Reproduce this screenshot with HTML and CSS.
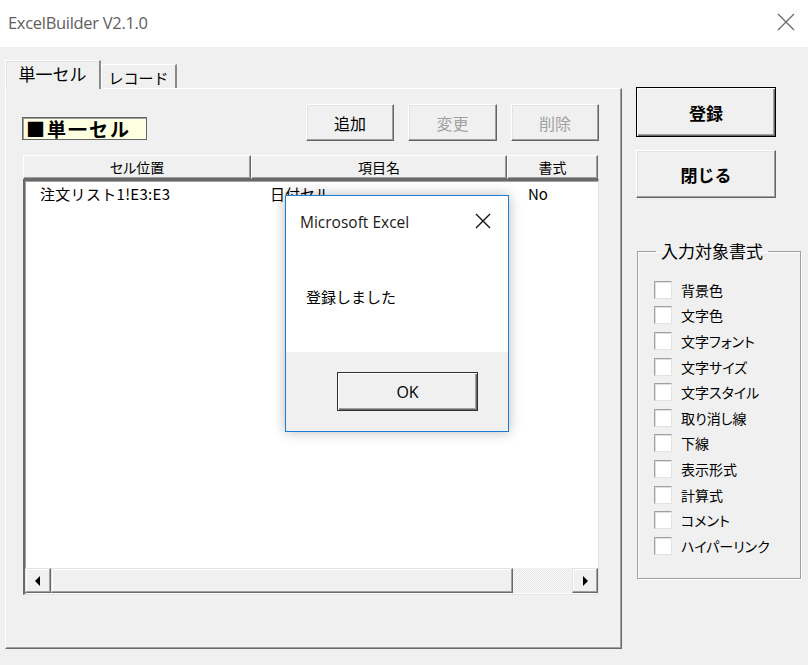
FILE: index.html
```html
<!DOCTYPE html>
<html lang="ja">
<head>
<meta charset="utf-8">
<title>ExcelBuilder</title>
<link rel="stylesheet" href="styles.css">
</head>
<body>
<div class="window">
  <div class="titlebar">
    <span class="title">ExcelBuilder V2.1.0</span>
    <svg class="close" width="18" height="18" viewBox="0 0 18 18"><path d="M1 1L17 17M17 1L1 17" stroke="#6b6b6b" stroke-width="1.3" fill="none"/></svg>
  </div>
  <div class="client">
    <div class="left">
      <div class="tabstrip">
        <div class="tab active">単一セル</div>
        <div class="tab">レコード</div>
      </div>
      <div class="panel">
        <div class="toolbar">
          <div class="mode-label">■単一セル</div>
          <button class="btn first">追加</button>
          <button class="btn disabled">変更</button>
          <button class="btn disabled">削除</button>
        </div>
        <div class="list-head">
          <div class="hcell">セル位置</div>
          <div class="hcell">項目名</div>
          <div class="hcell">書式</div>
        </div>
        <div class="list-body">
          <div class="rows">
            <div class="row">
              <span class="c1">注文リスト1!E3:E3</span>
              <span class="c2">日付セル</span>
              <span class="c3">No</span>
            </div>
          </div>
          <div class="hscroll">
            <div class="sb-btn"><svg width="6" height="10" viewBox="0 0 6 10"><path d="M5 0V10L0 5Z" fill="#000"/></svg></div>
            <div class="sb-thumb"></div>
            <div class="sb-track"></div>
            <div class="sb-btn"><svg width="6" height="10" viewBox="0 0 6 10"><path d="M1 0V10L6 5Z" fill="#000"/></svg></div>
          </div>
        </div>
      </div>
    </div>
    <div class="right">
      <button class="btn big default">登録</button>
      <button class="btn big">閉じる</button>
      <fieldset class="group">
        <legend>入力対象書式</legend>
        <label class="chk"><span class="box"></span>背景色</label>
        <label class="chk"><span class="box"></span>文字色</label>
        <label class="chk"><span class="box"></span>文字フォント</label>
        <label class="chk"><span class="box"></span>文字サイズ</label>
        <label class="chk"><span class="box"></span>文字スタイル</label>
        <label class="chk"><span class="box"></span>取り消し線</label>
        <label class="chk"><span class="box"></span>下線</label>
        <label class="chk"><span class="box"></span>表示形式</label>
        <label class="chk"><span class="box"></span>計算式</label>
        <label class="chk"><span class="box"></span>コメント</label>
        <label class="chk"><span class="box"></span>ハイパーリンク</label>
      </fieldset>
    </div>
  </div>
  <div class="msgbox">
    <div class="msg-title">
      <span>Microsoft Excel</span>
      <svg width="16" height="16" viewBox="0 0 16 16"><path d="M1 1L15 15M15 1L1 15" stroke="#111" stroke-width="1.4" fill="none"/></svg>
    </div>
    <div class="msg-text">登録しました</div>
    <div class="msg-foot">
      <button class="ok">OK</button>
    </div>
  </div>
</div>
</body>
</html>
```
FILE: styles.css
```css
* { box-sizing: border-box; }
html, body { margin: 0; padding: 0; }
body {
  width: 808px;
  height: 665px;
  overflow: hidden;
  font-family: "Noto Sans CJK JP", "Noto Sans", sans-serif;
  font-size: 15px;
  color: #000;
  background: #f0f0f0;
}
.window { position: relative; width: 808px; height: 665px; }
.titlebar {
  height: 47px;
  background: #fff;
  display: flex;
  align-items: center;
  justify-content: space-between;
  padding: 0 13px 0 8px;
}
.title {
  font-family: "Open Sans", "Noto Sans", sans-serif;
  font-size: 16.5px;
  color: #5e5e5e;
  margin-top: -2px;
  letter-spacing: -0.3px;
}
.close { margin-top: -4px; }
.client {
  height: 618px;
  display: flex;
  padding: 13px 0 0 5px;
}
.left { width: 617px; display: flex; flex-direction: column; }
.tabstrip {
  height: 28px;
  display: flex;
  align-items: flex-end;
  position: relative;
  z-index: 1;
}
.tab {
  height: 24px;
  width: 76px;
  background: #f0f0f0;
  border-top: 1px solid #fff;
  border-left: 1px solid #fff;
  border-right: 2px solid #8a8a8a;
  display: flex;
  align-items: center;
  justify-content: center;
  font-size: 15px;
  line-height: 1;
  padding-top: 1px;
}
.tab.active {
  width: 96px;
  height: 29px;
  margin-bottom: -1px;
  font-size: 17px;
  padding-bottom: 4px;
  box-shadow: inset 1px 1px 0 #e3e3e3;
}
.panel {
  height: 561px;
  border-top: 1px solid #fff;
  border-left: 1px solid #fff;
  border-right: 1px solid #696969;
  border-bottom: 1px solid #696969;
  box-shadow: inset -1px -1px 0 #a0a0a0;
  padding: 0 22px 0 17px;
  display: flex;
  flex-direction: column;
}
.toolbar {
  margin-top: 15px;
  height: 37px;
  display: flex;
  align-items: flex-end;
  gap: 14px;
}
.mode-label {
  margin-left: -1px;
  margin-bottom: 1px;
  width: 125px;
  height: 23px;
  background: #ffffe1;
  border: 1px solid #646464;
  box-shadow: inset 1px 1px 0 #a0a0a0;
  font-weight: bold;
  font-size: 19px;
  line-height: 21px;
  padding-left: 3px;
  letter-spacing: 2px;
  white-space: nowrap;
  display: flex;
  align-items: center;
}
.btn {
  font-family: "Noto Sans CJK JP", sans-serif;
  font-size: 16px;
  background: #f0f0f0;
  border: 1px solid;
  border-color: #fff #646464 #646464 #fff;
  box-shadow: inset -1px -1px 0 #a0a0a0, inset 1px 1px 0 #e3e3e3;
  width: 88px;
  height: 37px;
  padding: 0;
  color: #000;
  line-height: 1;
}
.btn.first { margin-left: auto; }
.btn.disabled { color: #a0a0a0; width: 89px; }
.btn.disabled + .btn.disabled { width: 88px; }
.list-head {
  margin-top: 14px;
  height: 24px;
  display: grid;
  grid-template-columns: 228px 256px 91px;
}
.hcell {
  background: #f0f0f0;
  border-top: 1px solid #fff;
  border-left: 1px solid #fff;
  border-right: 1px solid #696969;
  border-bottom: 1px solid #696969;
  box-shadow: inset -1px -1px 0 #a0a0a0;
  text-align: center;
  font-size: 14px;
  line-height: 22px;
  font-feature-settings: "palt";
}
.list-body {
  height: 416px;
  background: #fff;
  border-top: 2px solid;
  border-left: 2px solid;
  border-color: #6a6a6a #6a6a6a #f0f0f0 #6a6a6a;
  border-right: 1px solid #e3e3e3;
  border-bottom: 1px solid #e3e3e3;
  box-shadow: inset 1px 1px 0 #a0a0a0;
  display: flex;
  flex-direction: column;
}
.rows { flex: 1; }
.row {
  display: grid;
  grid-template-columns: 226px 256px 90px;
  padding-top: 3px;
  height: 22px;
  line-height: 20px;
}
.c1 { padding-left: 15px; letter-spacing: 0.3px; }
.c2 { padding-left: 19px; }
.c3 { padding-left: 21px; }
.hscroll {
  height: 25px;
  display: flex;
  margin: 0 0 1px 0;
}
.sb-btn, .sb-thumb {
  background: #f0f0f0;
  border: 1px solid;
  border-color: #e3e3e3 #696969 #696969 #e3e3e3;
  box-shadow: inset -1px -1px 0 #a0a0a0, inset 1px 1px 0 #fff;
}
.sb-btn {
  width: 26px;
  display: flex;
  align-items: center;
  justify-content: center;
}
.sb-thumb { width: 462px; }
.sb-track {
  flex: 1;
  background-color: #f4f4f4;
  background-image: repeating-conic-gradient(#e8e8e8 0 25%, #f8f8f8 0 50%);
  background-size: 2px 2px;
}
.right {
  width: 164px;
  margin-left: 14px;
  display: flex;
  flex-direction: column;
}
.btn.big {
  width: 140px;
  height: 48px;
  font-weight: bold;
  font-size: 17px;
}
.btn.default {
  margin-top: 27px;
  height: 50px;
  border: 1px solid #000;
  box-shadow: inset 1px 1px 0 #fff, inset -1px -1px 0 #696969, inset -2px -2px 0 #a0a0a0;
  margin-bottom: 13px;
}
.group {
  margin: 43px 0 0 1px;
  width: 164px;
  height: 338px;
  border: 1px solid #a0a0a0;
  box-shadow: 1px 1px 0 #fff, inset 1px 1px 0 #fff;
  padding: 16px 0 0 16px;
  min-width: 0;
}
.group legend {
  font-size: 17px;
  padding: 0 5px;
  margin-left: 2px;
  line-height: 20px;
}
.chk {
  display: flex;
  align-items: center;
  height: 25.6px;
  font-size: 14px;
  gap: 9px;
  font-feature-settings: "palt";
}
.box {
  width: 18px;
  height: 18px;
  background: #fff;
  border: 1px solid;
  border-color: #a0a0a0 #e3e3e3 #e3e3e3 #a0a0a0;
  box-shadow: inset 1px 1px 0 #e0e0e0;
}
.msgbox {
  position: absolute;
  left: 285px;
  top: 195px;
  width: 224px;
  height: 237px;
  background: #fff;
  border: 1px solid #1a7dd7;
  box-shadow: 0 0 12px rgba(0,0,0,0.28);
  display: flex;
  flex-direction: column;
}
.msg-title {
  height: 50px;
  display: flex;
  align-items: center;
  justify-content: space-between;
  padding: 0 17px 0 14px;
  font-family: "Open Sans", "Noto Sans", sans-serif;
  font-size: 15.5px;
  color: #1a1a1a;
}
.msg-title span { margin-top: 1px; }
.msg-text {
  height: 106px;
  padding: 41px 0 0 20px;
  font-size: 15px;
  line-height: 20px;
}
.msg-foot {
  flex: 1;
  background: #f0f0f0;
  padding: 20px 0 0 51px;
}
.ok {
  width: 141px;
  height: 39px;
  background: #f0f0f0;
  border: 1px solid #303030;
  box-shadow: inset 1px 1px 0 #fff, inset -1px -1px 0 #696969, inset -2px -2px 0 #a0a0a0;
  font-family: "Open Sans", "Noto Sans", sans-serif;
  font-size: 16px;
  color: #000;
  padding: 0;
}
```
